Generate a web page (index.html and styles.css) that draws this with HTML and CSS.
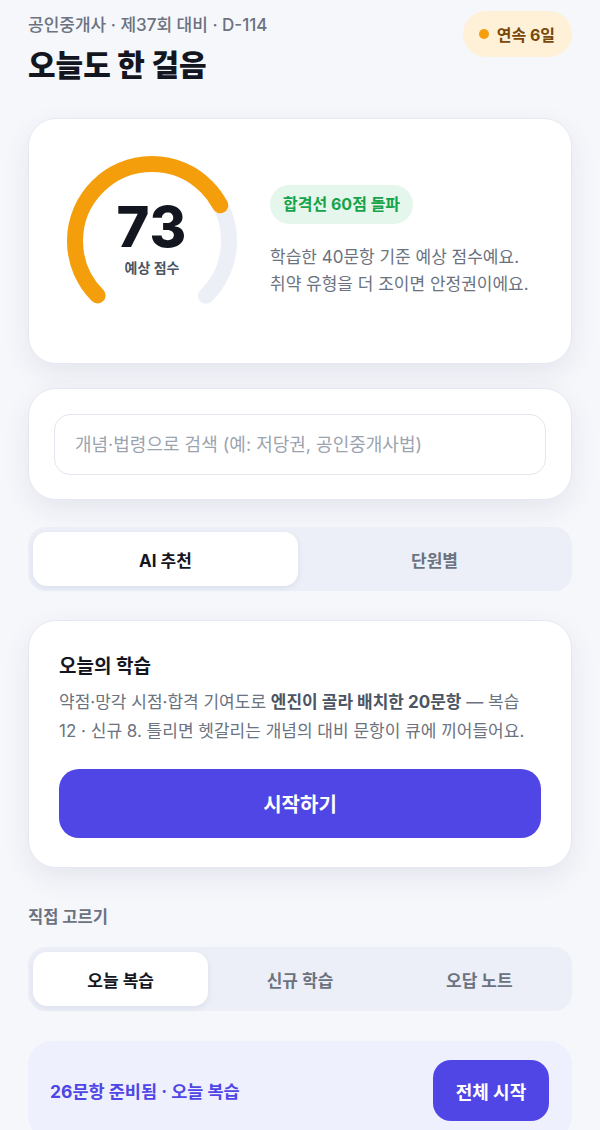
FILE: index.html
```html
<!DOCTYPE html>
<html lang="ko">
<head>
<meta charset="utf-8">
<title>오늘도 한 걸음</title>
<link rel="stylesheet" href="styles.css">
</head>
<body>
<div class="page">
  <header class="header">
    <div class="header-text">
      <div class="subtitle">공인중개사 · 제37회 대비 · D-114</div>
      <h1 class="title">오늘도 한 걸음</h1>
    </div>
    <div class="streak"><span class="streak-dot"></span>연속 6일</div>
  </header>

  <section class="card score-card">
    <div class="gauge">
      <svg class="gauge-svg" width="170" height="170" viewBox="0 0 170 170">
        <circle cx="85" cy="85" r="77" fill="none" stroke="#eceff6" stroke-width="16" stroke-linecap="round" stroke-dasharray="362.85 483.81" transform="rotate(135 85 85)"/>
        <circle cx="85" cy="85" r="77" fill="none" stroke="#f59e0b" stroke-width="16" stroke-linecap="round" stroke-dasharray="264.88 483.81" transform="rotate(135 85 85)"/>
      </svg>
      <div class="gauge-center">
        <div class="gauge-num">73</div>
        <div class="gauge-label">예상 점수</div>
      </div>
    </div>
    <div class="score-info">
      <div class="pass-badge">합격선 60점 돌파</div>
      <p class="score-desc">학습한 40문항 기준 예상 점수예요.<br>취약 유형을 더 조이면 안정권이에요.</p>
    </div>
  </section>

  <section class="card search-card">
    <input class="search-input" type="text" placeholder="개념·법령으로 검색 (예: 저당권, 공인중개사법)">
  </section>

  <nav class="segment segment-2 seg-main">
    <div class="seg-item active">AI 추천</div>
    <div class="seg-item">단원별</div>
  </nav>

  <section class="card today-card">
    <h2 class="today-title">오늘의 학습</h2>
    <p class="today-desc">약점·망각 시점·합격 기여도로 <strong>엔진이 골라 배치한 20문항</strong> — 복습 12 · 신규 8. 틀리면 헷갈리는 개념의 대비 문항이 큐에 끼어들어요.</p>
    <button class="primary-btn">시작하기</button>
  </section>

  <div class="section-label">직접 고르기</div>

  <nav class="segment segment-3">
    <div class="seg-item active">오늘 복습</div>
    <div class="seg-item">신규 학습</div>
    <div class="seg-item">오답 노트</div>
  </nav>

  <section class="ready-card">
    <div class="ready-text">26문항 준비됨 · 오늘 복습</div>
    <button class="ready-btn">전체 시작</button>
  </section>
</div>
</body>
</html>
```

FILE: styles.css
```css
* { box-sizing: border-box; }

html, body {
  margin: 0;
  padding: 0;
  background: #f6f7fb;
}

body {
  font-family: "Inter", "Noto Sans CJK KR", "Noto Sans", sans-serif;
  color: #14161f;
  width: 600px;
  height: 1130px;
  overflow: hidden;
}

.page {
  padding: 11px 28px 0;
}

.header {
  display: flex;
  justify-content: space-between;
  align-items: flex-start;
}

.subtitle {
  margin-top: 4px;
  font-size: 17px;
  line-height: 20px;
  color: #6b7280;
  font-weight: 500;
}

.title {
  margin: 11px 0 0;
  font-size: 30px;
  line-height: 38px;
  font-weight: 800;
  color: #14161f;
}

.streak {
  display: flex;
  align-items: center;
  gap: 8px;
  height: 46px;
  padding: 0 17px 0 16px;
  border-radius: 23px;
  background: #fef1d7;
  color: #7a4609;
  font-size: 16px;
  font-weight: 700;
}

.streak-dot {
  width: 10px;
  height: 10px;
  border-radius: 50%;
  background: #f59e0b;
}

.card {
  background: #ffffff;
  border: 1px solid #e6e8f1;
  border-radius: 28px;
  box-shadow: 0 10px 28px rgba(30, 40, 90, 0.08);
}

.score-card {
  margin-top: 34px;
  height: 246px;
  padding: 37px 38px;
  display: flex;
  align-items: center;
  gap: 33px;
}

.gauge {
  position: relative;
  width: 170px;
  height: 170px;
  flex: none;
}

.gauge-svg {
  display: block;
}

.gauge-center {
  position: absolute;
  inset: 0;
  display: flex;
  flex-direction: column;
  align-items: center;
  justify-content: center;
  padding-bottom: 6px;
}

.gauge-num {
  font-size: 56px;
  line-height: 56px;
  font-weight: 800;
  letter-spacing: 1px;
  color: #14161f;
}

.gauge-label {
  margin-top: 4px;
  font-size: 14px;
  line-height: 18px;
  font-weight: 700;
  color: #4b5563;
}

.score-info {
  display: flex;
  flex-direction: column;
  align-items: flex-start;
}

.pass-badge {
  height: 39px;
  line-height: 39px;
  padding: 0 13px;
  border-radius: 20px;
  background: #e5f6ec;
  color: #16a34a;
  font-size: 16px;
  font-weight: 700;
}

.score-desc {
  margin: 20px 0 0;
  font-size: 17px;
  line-height: 27px;
  color: #6b7280;
}

.search-card {
  margin-top: 24px;
  height: 112px;
  padding: 25px;
}

.search-input {
  display: block;
  width: 100%;
  height: 61px;
  border: 1.5px solid #e3e6ee;
  border-radius: 16px;
  padding: 0 20px;
  font-family: inherit;
  font-size: 18px;
  color: #14161f;
  background: #ffffff;
  outline: none;
}

.search-input::placeholder {
  color: #9ca3af;
}

.segment {
  display: grid;
  gap: 4px;
  padding: 5px;
  height: 64px;
  border-radius: 18px;
  background: #eceff7;
}

.segment-2 { grid-template-columns: 1fr 1fr; }
.segment-3 { grid-template-columns: 1fr 1fr 1fr; }

.seg-main {
  margin-top: 27px;
}

.seg-item {
  display: flex;
  align-items: center;
  justify-content: center;
  border-radius: 14px;
  font-size: 17px;
  font-weight: 700;
  color: #6b7280;
}

.seg-item.active {
  background: #ffffff;
  color: #14161f;
  box-shadow: 0 2px 6px rgba(30, 40, 90, 0.08);
}

.today-card {
  margin-top: 29px;
  height: 248px;
  padding: 32px 30px 29px;
  display: flex;
  flex-direction: column;
}

.today-title {
  margin: 0;
  font-size: 19px;
  line-height: 28px;
  font-weight: 700;
  color: #14161f;
}

.today-desc {
  margin: 7px 0 0;
  font-size: 17px;
  line-height: 29px;
  color: #6b7280;
}

.today-desc strong {
  font-weight: 700;
  color: #4b5563;
}

.primary-btn {
  margin-top: auto;
  height: 69px;
  width: 100%;
  flex: none;
  border: none;
  border-radius: 20px;
  background: #4f46e5;
  color: #ffffff;
  font-family: inherit;
  font-size: 20px;
  font-weight: 700;
}

.section-label {
  margin-top: 38px;
  font-size: 16.5px;
  line-height: 22px;
  font-weight: 700;
  color: #6b7280;
}

.segment-3 {
  margin-top: 19px;
}

.ready-card {
  margin-top: 30px;
  display: flex;
  align-items: center;
  justify-content: space-between;
  padding: 19px 23px 19px 22px;
  border-radius: 24px;
  background: #eef0fd;
}

.ready-text {
  font-size: 17.5px;
  font-weight: 700;
  color: #4f46e5;
}

.ready-btn {
  width: 116px;
  height: 61px;
  border: none;
  border-radius: 18px;
  background: #4f46e5;
  color: #ffffff;
  font-family: inherit;
  font-size: 18px;
  font-weight: 700;
}
```
